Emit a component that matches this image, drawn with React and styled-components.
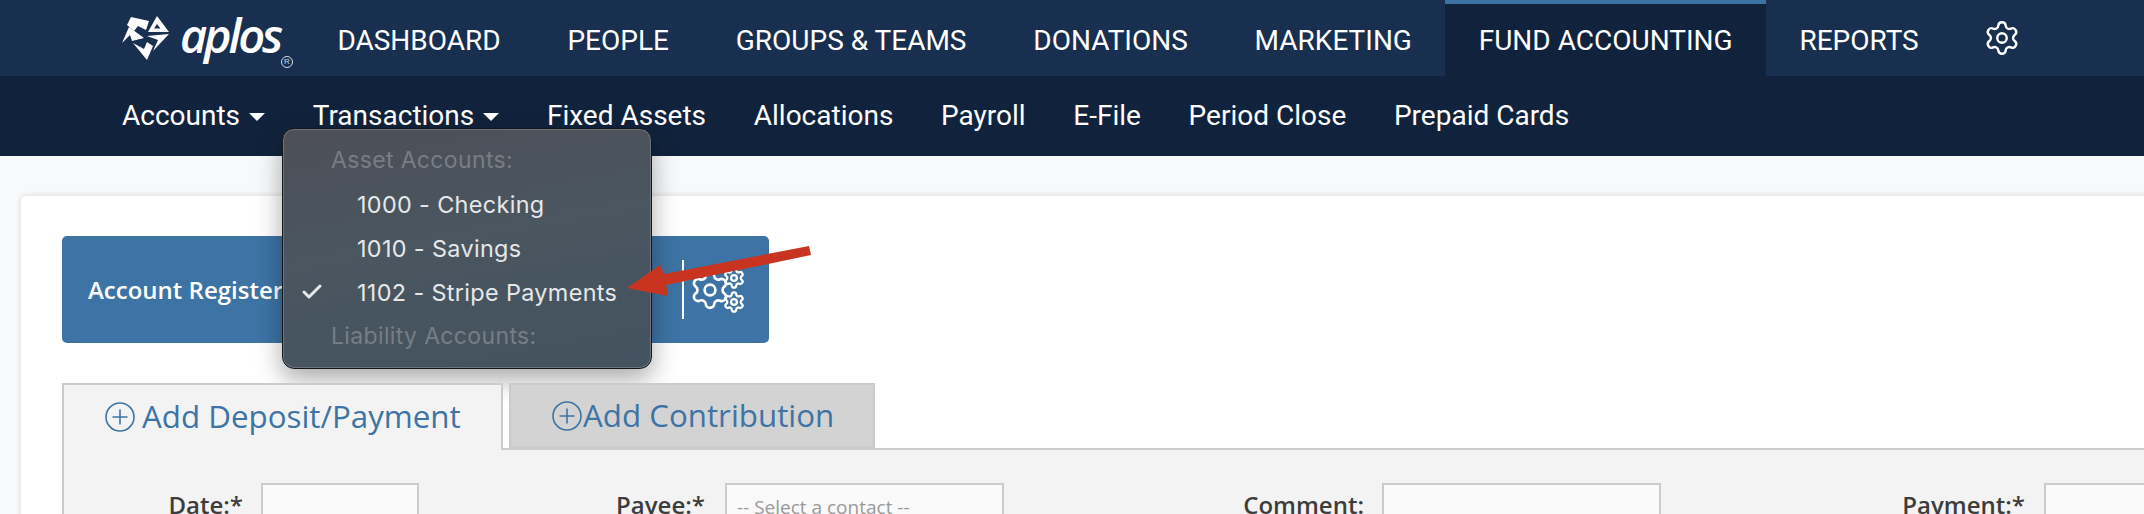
import styled, { createGlobalStyle } from "styled-components";
import { Settings, Check } from "lucide-react";

const GlobalStyle = createGlobalStyle`
  html, body {
    margin: 0;
    height: 514px;
    overflow: hidden;
    background: #f8f9fb;
  }
  * { box-sizing: border-box; }
`;

const Page = styled.div`
  position: relative;
  width: 2144px;
  height: 514px;
  overflow: hidden;
`;

const TopNav = styled.nav`
  display: flex;
  align-items: stretch;
  height: 76px;
  padding-left: 122px;
  background: #182f50;
  font-family: Roboto, sans-serif;
  color: #fff;
`;

const Logo = styled.div`
  display: flex;
  align-items: center;
  width: 182px;
  gap: 10px;
`;

const LogoWord = styled.span`
  font-family: "Open Sans", sans-serif;
  font-style: italic;
  font-weight: 600;
  font-size: 47px;
  letter-spacing: -3.2px;
  line-height: 1;
  margin-top: -6px;
`;

const LogoMark = styled.span`
  font-family: "Liberation Sans", sans-serif;
  font-size: 8px;
  align-self: flex-end;
  margin: 0 0 8px -9px;
  width: 12px;
  height: 12px;
  line-height: 10px;
  text-align: center;
  border: 1px solid #d5dbe4;
  border-radius: 50%;
  color: #d5dbe4;
`;

const TopItem = styled.a`
  display: flex;
  align-items: center;
  padding: 0 33.4px;
  font-size: 28px;
  white-space: nowrap;
  background: ${(p) => (p.$active ? "#11233c" : "transparent")};
  border-top: 4px solid ${(p) => (p.$active ? "#3d74a5" : "transparent")};
`;

const GearItem = styled(TopItem)`
  padding: 0 0 4px 31px;
`;

const SubNav = styled.nav`
  display: flex;
  align-items: center;
  gap: 47.7px;
  height: 80px;
  padding: 0 0 2px 122px;
  background: #11233c;
  font-family: Roboto, sans-serif;
  font-size: 28px;
  color: #fff;
`;

const SubItem = styled.a`
  display: flex;
  align-items: center;
  gap: 9px;
  white-space: nowrap;
`;

const Caret = styled.span`
  width: 0;
  height: 0;
  margin-top: 3px;
  border-left: 8px solid transparent;
  border-right: 8px solid transparent;
  border-top: 8px solid #fff;
`;

const Card = styled.section`
  margin: 40px -20px 0 21px;
  height: 400px;
  padding: 40px 0 0 41px;
  background: #fff;
  border-radius: 5px;
  box-shadow: 0 0 6px rgba(0, 0, 0, 0.14);
`;

const RegisterBar = styled.div`
  display: flex;
  align-items: center;
  width: 707px;
  height: 107px;
  padding-left: 26px;
  background: #3d74a5;
  border-radius: 5px;
  color: #fff;
`;

const RegisterTitle = styled.span`
  flex: 0 0 594px;
  font-family: "Open Sans", sans-serif;
  font-weight: 600;
  font-size: 24px;
`;

const Divider = styled.span`
  width: 2px;
  height: 59px;
  background: #fff;
`;

const GearsIcon = styled.svg`
  margin-left: 8px;
  width: 52px;
  height: 50px;
  overflow: visible;
  color: #fff;
`;

const Tabs = styled.div`
  display: flex;
  align-items: flex-end;
  gap: 6px;
  height: 65px;
  margin-top: 40px;
  position: relative;
  z-index: 1;
`;

const Tab = styled.a`
  display: flex;
  align-items: center;
  gap: ${(p) => p.$gap}px;
  width: ${(p) => p.$width}px;
  height: ${(p) => (p.$active ? 67 : 65)}px;
  margin-bottom: ${(p) => (p.$active ? -2 : 0)}px;
  padding: 0 0 ${(p) => (p.$active ? 4 : 1)}px ${(p) => p.$pad}px;
  border: 2px solid #cbcbcb;
  border-bottom: ${(p) => (p.$active ? "none" : "2px solid #cbcbcb")};
  background: ${(p) => (p.$active ? "#f3f3f3" : "#d3d3d3")};
  font-family: "Open Sans", sans-serif;
  font-size: 31.3px;
  color: #3d74a5;
  white-space: nowrap;
`;

const TabCircle = styled.svg`
  flex: none;
  width: 30px;
  height: 30px;
  margin-top: 2px;
  color: #3d74a5;
`;

const FormPanel = styled.div`
  display: flex;
  height: 200px;
  padding: 33px 0 0;
  border: 2px solid #cbcbcb;
  background: #f3f3f3;
`;

const Field = styled.div`
  display: flex;
  flex: none;
  width: ${(p) => p.$labelWidth + p.$inputWidth}px;
`;

const Label = styled.label`
  flex: 0 0 ${(p) => p.$width}px;
  padding: 8px ${(p) => p.$gap}px 0 0;
  text-align: right;
  font-family: "Open Sans", sans-serif;
  font-weight: 600;
  font-size: 24px;
  line-height: 28px;
  color: #3d3d3d;
`;

const Input = styled.div`
  flex: 1;
  height: 60px;
  padding: 9px 0 0 10px;
  border: 2px solid #cbcbcb;
  background: #fafafa;
  font-family: "Open Sans", sans-serif;
  font-size: 19px;
  line-height: 26px;
  color: #999;
`;

const Menu = styled.div`
  position: absolute;
  left: 282px;
  top: 128px;
  width: 370px;
  height: 241px;
  padding-top: 9px;
  border: 1px solid #14161a;
  border-radius: 12px;
  background: linear-gradient(170deg, #4d4f57 0%, #4a5660 45%, #43535f 100%);
  box-shadow:
    inset 0 0 0 1px #6e747b,
    0 10px 26px rgba(0, 0, 0, 0.34);
  font-family: Inter, sans-serif;
  letter-spacing: 0.35px;
`;

const MenuRow = styled.div`
  position: relative;
  display: flex;
  align-items: center;
  height: 44px;
  padding-left: ${(p) => (p.$header ? 48 : 74)}px;
  font-size: ${(p) => (p.$header ? 23 : 23.4)}px;
  color: ${(p) => (p.$header ? "#777e85" : "#e6e7e9")};
  white-space: nowrap;
`;

const MenuCheck = styled(Check)`
  position: absolute;
  left: 17px;
  top: 10px;
`;

const Arrow = styled.svg`
  position: absolute;
  left: 620px;
  top: 240px;
  width: 200px;
  height: 70px;
`;

const StarLogo = () => (
  <svg width="48" height="46" viewBox="0 0 48 46" fill="#fff" style={{ flex: "none" }}>
    <polygon points="9,2 27,6 24,15 16,11 12,16 5,10" />
    <path fillRule="evenodd" d="M35 1 L47 17 L26 17 Z M35 9 L32 13.5 L38.5 13.5 Z" />
    <polygon points="47,19 25,21 36,25 31,36" />
    <polygon points="11,28 22,34 25,27 31,31 25,45" />
    <polygon points="0,28 7,12 22,23 10,26 8,20" />
  </svg>
);

const PlusCircle = () => (
  <TabCircle viewBox="0 0 30 30" fill="none" stroke="currentColor" strokeWidth="1.6">
    <circle cx="15" cy="15" r="14" />
    <path d="M15 7.5v15M7.5 15h15" />
  </TabCircle>
);

const topItems = ["DASHBOARD", "PEOPLE", "GROUPS & TEAMS", "DONATIONS", "MARKETING"];
const subItems = [
  { name: "Accounts", caret: true },
  { name: "Transactions", caret: true },
  { name: "Fixed Assets" },
  { name: "Allocations" },
  { name: "Payroll" },
  { name: "E-File" },
  { name: "Period Close" },
  { name: "Prepaid Cards" },
];
const fields = [
  { label: "Date:*", labelWidth: 197, gap: 18, inputWidth: 158 },
  { label: "Payee:*", labelWidth: 306, gap: 20, inputWidth: 279, value: "-- Select a contact --" },
  { label: "Comment:", labelWidth: 378, gap: 18, inputWidth: 279 },
  { label: "Payment:*", labelWidth: 383, gap: 19, inputWidth: 200 },
];

export default function App() {
  return (
    <Page>
      <GlobalStyle />
      <TopNav>
        <Logo>
          <StarLogo />
          <LogoWord>aplos</LogoWord>
          <LogoMark>R</LogoMark>
        </Logo>
        {topItems.map((item) => (
          <TopItem key={item}>{item}</TopItem>
        ))}
        <TopItem $active>FUND ACCOUNTING</TopItem>
        <TopItem>REPORTS</TopItem>
        <GearItem>
          <Settings size={38} strokeWidth={1.5} />
        </GearItem>
      </TopNav>

      <SubNav>
        {subItems.map((item) => (
          <SubItem key={item.name}>
            {item.name}
            {item.caret && <Caret />}
          </SubItem>
        ))}
      </SubNav>

      <Card>
        <RegisterBar>
          <RegisterTitle>Account Register</RegisterTitle>
          <Divider />
          <GearsIcon viewBox="0 0 52 50" fill="none">
            <Settings x="-3.5" y="3.5" width="43" height="43" strokeWidth={1.5} />
            <Settings x="30.5" y="1.5" width="23" height="23" strokeWidth={2.4} />
            <Settings x="30.5" y="25.5" width="23" height="23" strokeWidth={2.4} />
          </GearsIcon>
        </RegisterBar>

        <Tabs>
          <Tab $active $width={441} $pad={41} $gap={7}>
            <PlusCircle />
            Add Deposit/Payment
          </Tab>
          <Tab $width={366} $pad={41} $gap={1}>
            <PlusCircle />
            Add Contribution
          </Tab>
        </Tabs>

        <FormPanel>
          {fields.map((f) => (
            <Field key={f.label} $labelWidth={f.labelWidth} $inputWidth={f.inputWidth}>
              <Label $width={f.labelWidth} $gap={f.gap}>
                {f.label}
              </Label>
              <Input>{f.value}</Input>
            </Field>
          ))}
        </FormPanel>
      </Card>

      <Menu>
        <MenuRow $header>Asset Accounts:</MenuRow>
        <MenuRow>1000 - Checking</MenuRow>
        <MenuRow>1010 - Savings</MenuRow>
        <MenuRow>
          <MenuCheck size={24} strokeWidth={3} />
          1102 - Stripe Payments
        </MenuRow>
        <MenuRow $header>Liability Accounts:</MenuRow>
      </Menu>

      <Arrow viewBox="620 240 200 70">
        <polygon fill="#c93421" points="627,288 660,265 664,274 809,246 811,255 666,285 668,296" />
      </Arrow>
    </Page>
  );
}
